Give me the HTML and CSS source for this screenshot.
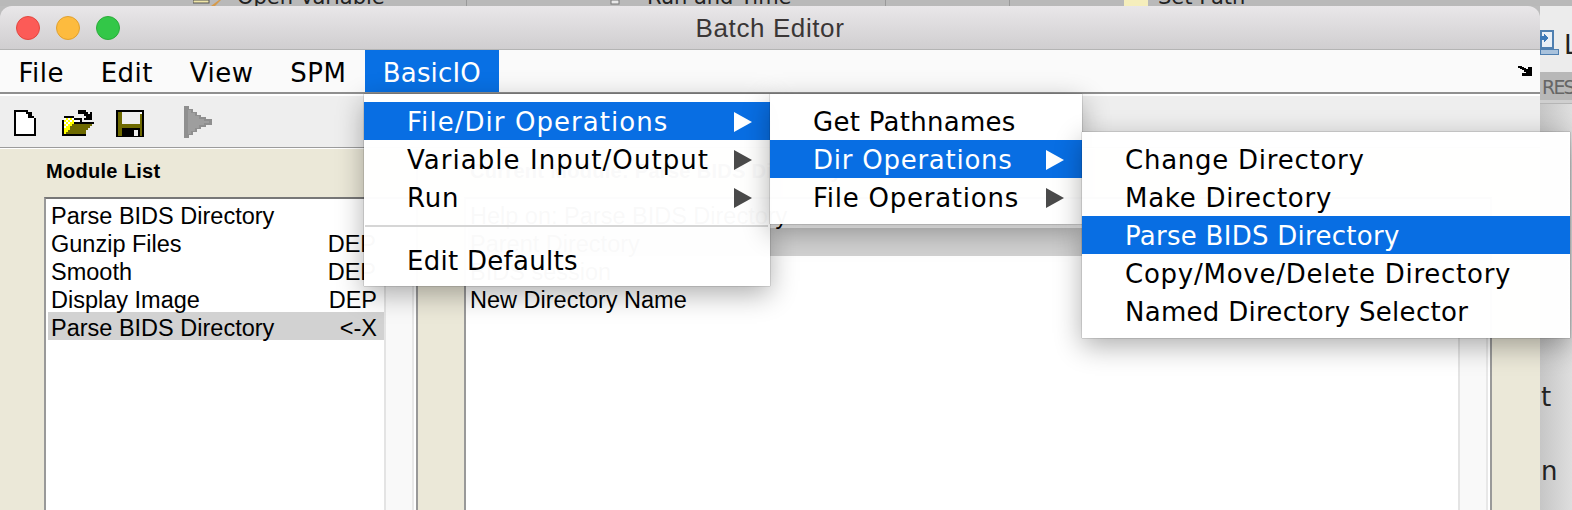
FILE: index.html
```html
<!DOCTYPE html>
<html lang="en">
<head>
    <meta charset="UTF-8">
    <title>Batch Editor</title>
    <link rel="stylesheet" href="styles.css">
</head>
<body>
    <div class="strip">
        <svg class="strip-icon" width="28" height="6" viewBox="0 0 28 6"><rect x="0" y="0" width="16" height="3" fill="#efe6a8" stroke="#555" stroke-width="1"/><path d="M18 6 L26 0 L28 0 L22 6 Z" fill="#d69a4a"/></svg>
        <span class="strip-text strip-open">Open Variable</span>
        <i class="strip-sep"></i>
        <svg class="strip-icon strip-icon-run" width="18" height="6" viewBox="0 0 18 6"><rect x="4" y="0" width="8" height="4" fill="#e8e8e8" stroke="#777"/></svg>
        <span class="strip-text strip-run">Run and Time</span>
        <i class="strip-sep"></i>
        <i class="strip-sep sep-far"></i>
        <i class="strip-file"></i>
        <span class="strip-text strip-path">Set Path</span>
    </div>

    <div class="desk">
        <div class="window">
            <div class="titlebar">
                <span class="light red"></span>
                <span class="light amber"></span>
                <span class="light green"></span>
                <span class="title">Batch Editor</span>
            </div>

            <div class="menubar">
                <span class="menubar-item">File</span>
                <span class="menubar-item">Edit</span>
                <span class="menubar-item">View</span>
                <span class="menubar-item">SPM</span>
                <span class="menubar-item active">BasicIO</span>
                <svg class="dock-icon" width="14" height="10" viewBox="0 0 14 10" shape-rendering="crispEdges">
                    <path d="M0 0H4V1H6V2H8V3H10V1H14V10H4V7H8V6H6V4H4V3H2V2H0Z" fill="#000"/>
                </svg>
            </div>

            <div class="toolbar">
                <svg class="tool-new" width="22" height="32" viewBox="0 0 22 32" shape-rendering="crispEdges">
                    <path d="M0 4H14V6H16V8H18V10H20V12H22V30H0Z" fill="#000"/>
                    <path d="M2 6H12V8H14V12H20V28H2Z" fill="#fff"/>
                    <rect x="16" y="6" width="2" height="2" fill="#000"/>
                </svg>
                <svg class="tool-open" width="32" height="32" viewBox="0 0 32 32" shape-rendering="crispEdges">
                    <path d="M14 6H16V4H24V6H26V8H28V6H30V14H22V12H24V10H22V8H16V6Z" fill="#000"/>
                    <path d="M0 14H2V10H12V12H20V16H32V18H30V20H28V22H26V24H24V30H0Z" fill="#000"/>
                    <rect x="2" y="12" width="10" height="16" fill="#ffff00"/>
                    <path d="M2 12h2v2h-2zM6 12h2v2h-2zM10 12h2v2h-2zM4 14h2v2h-2zM8 14h2v2h-2zM12 14h6v2h-6zM2 16h2v2h-2zM6 16h2v2h-2zM4 18h2v2h-2zM2 20h2v2h-2z" fill="#fff"/>
                    <path d="M10 18H30V20H28V22H26V24H24V28H4V26H6V24H8V20H10Z" fill="#6e6a00"/>
                </svg>
                <svg class="tool-save" width="28" height="32" viewBox="0 0 28 32" shape-rendering="crispEdges">
                    <rect x="0" y="4" width="28" height="27" fill="#000"/>
                    <rect x="2" y="6" width="24" height="24" fill="#6e6a00"/>
                    <rect x="6" y="6" width="18" height="12" fill="#eeeeee"/>
                    <rect x="6" y="20" width="18" height="2" fill="#6e6a00"/>
                    <rect x="6" y="22" width="18" height="9" fill="#000"/>
                    <rect x="18" y="24" width="4" height="6" fill="#eeeeee"/>
                    <rect x="24" y="6" width="2" height="2" fill="#fff"/>
                </svg>
                <svg class="tool-run" width="28" height="32" viewBox="0 0 28 32" shape-rendering="crispEdges">
                    <path d="M0 0H5V3H9V6H13V9H17V11H22V13H28V19H22V21H17V23H13V26H9V29H5V32H0Z" fill="#8f8f8f"/>
                    <path d="M4 4H7V7H11V10H15V13H20V15H25V17H20V19H15V22H11V25H7V28H4Z" fill="#9e9e9e"/>
                </svg>
            </div>

            <div class="panes">
                <div class="pane pane-left">
                    <div class="pane-label">Module List</div>
                    <div class="listbox">
                        <div class="list-rows">
                            <div class="row">Parse BIDS Directory</div>
                            <div class="row">Gunzip Files<span class="tag tag-dep">DEP</span></div>
                            <div class="row">Smooth<span class="tag tag-dep">DEP</span></div>
                            <div class="row">Display Image<span class="tag">DEP</span></div>
                            <div class="row selected">Parse BIDS Directory<span class="tag">&lt;-X</span></div>
                        </div>
                        <div class="scroll"></div>
                    </div>
                </div>
                <div class="pane pane-right">
                    <div class="pane-label">Current Module: Parse BIDS Directory</div>
                    <div class="listbox">
                        <div class="list-rows">
                            <div class="row">Help on: Parse BIDS Directory</div>
                            <div class="row selected">Parent Directory<span class="tag tag-wide">&lt;-X</span></div>
                            <div class="row">BIDS session</div>
                            <div class="row">New Directory Name</div>
                        </div>
                        <div class="scroll"></div>
                    </div>
                </div>
            </div>
        </div>

        <div class="side">
            <div class="side-top">
                <svg class="side-icon" width="20" height="26" viewBox="0 0 20 26" shape-rendering="crispEdges">
                    <rect x="1" y="1" width="12" height="17" fill="#e9eff6" stroke="#4f7fb0" stroke-width="2"/>
                    <path d="M0 6H4V4L8 8L4 12V10H0Z" fill="#3b78b8"/>
                    <rect x="0" y="19" width="18" height="5" fill="#a9c2dc" stroke="#4f7fb0"/>
                </svg>
                <span class="side-letter">L</span>
            </div>
            <div class="side-band">RES</div>
            <div class="side-body">
                <span class="side-t">t</span>
                <span class="side-n">n</span>
            </div>
        </div>
    </div>

    <div class="menu menu-first">
        <div class="menu-item hot wide">File/Dir Operations<span class="arrow"></span></div>
        <div class="menu-item wide">Variable Input/Output<span class="arrow"></span></div>
        <div class="menu-item">Run<span class="arrow"></span></div>
        <div class="menu-sep"></div>
        <div class="menu-item tight">Edit Defaults</div>
    </div>
    <div class="menu menu-second">
        <div class="menu-item tight">Get Pathnames</div>
        <div class="menu-item hot">Dir Operations<span class="arrow"></span></div>
        <div class="menu-item">File Operations<span class="arrow"></span></div>
    </div>
    <div class="menu menu-third">
        <div class="menu-item">Change Directory</div>
        <div class="menu-item">Make Directory</div>
        <div class="menu-item hot tight">Parse BIDS Directory</div>
        <div class="menu-item">Copy/Move/Delete Directory</div>
        <div class="menu-item tight">Named Directory Selector</div>
    </div>
</body>
</html>
```

FILE: styles.css
```css
html, body { margin: 0; height: 510px; overflow: hidden; }
body { background-color: #bcbcbc; font-family: "Liberation Sans", Arial, sans-serif; color: #000; position: relative; }

/* the window behind, only its bottom edge shows */
.strip { display: flex; align-items: flex-end; height: 6px; overflow: hidden; padding-left: 193px; background-color: #b9b9b9; }
.strip > * { flex: none; }
.strip-text { font: 21px/18px "DejaVu Sans", sans-serif; color: #222; white-space: nowrap; }
.strip-open { margin-left: 16px; width: 229px; }
.strip-sep { display: block; width: 1px; height: 6px; background-color: #999; }
.strip-icon-run { margin-left: 140px; }
.strip-run { margin-left: 22px; width: 238px; }
.sep-far { margin-left: 123px; }
.strip-file { display: block; width: 24px; height: 6px; margin-left: 114px; background-color: #f5eebc; }
.strip-path { margin-left: 10px; }

.desk { display: flex; height: 504px; }
.window { width: 1540px; flex: none; display: flex; flex-direction: column; border-radius: 12px 12px 0 0; overflow: hidden; }

.titlebar { position: relative; display: flex; align-items: center; flex: none; height: 43px; padding-left: 16px; gap: 16px; background: linear-gradient(#e9e7e9, #d0ced0); border-bottom: 1px solid #b4b4b4; }
.light { width: 22px; height: 22px; border-radius: 50%; border: 1px solid; }
.red { background-color: #fc5b57; border-color: #e2473f; }
.amber { background-color: #fdbb3e; border-color: #e0a02f; }
.green { background-color: #33c748; border-color: #2bac3a; }
.title { position: absolute; left: 0; right: 0; top: 7px; text-align: center; font-size: 26px; letter-spacing: .6px; color: #3a3636; }

.menubar { display: flex; flex: none; height: 42px; background-color: #fafafa; font: 26px/46px "DejaVu Sans", sans-serif; letter-spacing: .5px; }
.menubar-item { padding: 0 18.4px; }
.menubar-item.active { padding: 0 18px; background-color: #0870e4; color: #fff; letter-spacing: .15px; }
.dock-icon { margin: 16px 8px 0 auto; }

.toolbar { display: flex; flex: none; box-sizing: border-box; height: 56px; padding: 14px 0 0 14px; background: linear-gradient(#8f8f8f 0, #8f8f8f 1.5px, #fff 1.5px, #fff 4px, #eeeeee 4px); border-bottom: 1px solid #9c9c9c; }
.tool-open { margin-left: 26px; }
.tool-save { margin-left: 22px; }
.tool-run { margin-left: 40px; }

.panes { display: flex; flex: 1; min-height: 0; background-color: #ebe8d8; border-top: 1px solid #fff; }
.pane { display: flex; flex-direction: column; flex: none; box-sizing: border-box; }
.pane-left { width: 416px; padding-left: 44px; }
.pane-right { width: 1076px; padding-left: 46px; border-left: 2px solid #999; }
.pane-label { height: 48px; line-height: 44px; padding-left: 2px; font-size: 20px; font-weight: bold; letter-spacing: .3px; white-space: nowrap; }
.pane-right .pane-label { padding-left: 6px; }

.listbox { flex: 1; display: flex; background-color: #fff; border-top: 2px solid #777; border-left: 2px solid #999; }
.pane-right .listbox { border-right: 2px solid #999; border-top-color: #888; }
.list-rows { flex: 1; padding: 1px 0 0 2px; }
.row { display: flex; justify-content: space-between; height: 28px; line-height: 32px; padding: 0 7px 0 3px; font-size: 23.5px; white-space: nowrap; }
.pane-right .row { padding-left: 2px; }
.row.selected { background-color: #d2d2d2; }
.tag-dep { margin-right: 1px; }
.tag-wide { margin-right: 10px; }
.scroll { box-sizing: border-box; width: 30px; margin-right: 2px; flex: none; background-color: #f9f9f9; border-left: 2px solid #e4e4e4; border-right: 2px solid #e8e8e8; }

.side { flex: 1; display: flex; flex-direction: column; min-width: 0; overflow: hidden; background-color: #dcdcdc; }
.side-top { display: flex; height: 66px; padding-top: 24px; box-sizing: border-box; background-color: #ececec; }
.side-icon { flex: none; }
.side-letter { margin-left: 4px; font: 26px/30px "DejaVu Sans", sans-serif; color: #222; }
.side-band { height: 28px; padding-left: 2px; background-color: #b8b8b8; color: #666; font: 19px/30px "DejaVu Sans", sans-serif; letter-spacing: -1.8px; white-space: nowrap; border-bottom: 3px solid #cfcfcf; overflow: hidden; }
.side-body { flex: 1; display: flex; flex-direction: column; padding-left: 1px; border-top: 1px solid #b5b5b5; background: linear-gradient(90deg, #c6c6c6, #dedede); }
.side-t, .side-n { font: 26px/30px "DejaVu Sans", sans-serif; color: #222; }
.side-t { margin-top: 278px; }
.side-n { margin-top: 44px; }

/* popup menus, slightly see-through like the real ones */
.menu { position: absolute; box-sizing: border-box; padding: 8px 0; background-color: rgba(255, 255, 255, .975); box-shadow: 0 0 1px rgba(0, 0, 0, .6), 0 8px 26px rgba(0, 0, 0, .32); font: 26px/38px "DejaVu Sans", sans-serif; letter-spacing: .75px; white-space: nowrap; }
.menu-first { left: 364px; top: 94px; width: 406px; height: 192px; }
.menu-second { left: 770px; top: 94px; width: 312px; height: 130px; }
.menu-third { left: 1082px; top: 132px; width: 488px; height: 206px; }
.menu-item { display: flex; align-items: center; justify-content: space-between; box-sizing: border-box; height: 38px; padding: 2px 18px 0 43px; }
.menu-item.wide { letter-spacing: 1.05px; }
.menu-item.tight { letter-spacing: .28px; }
.menu-item.hot { background-color: rgba(0, 105, 226, .97); color: #fff; }
.menu-sep { height: 2px; margin: 9px 2px 14px 1px; background-color: #d6d6d6; }
.arrow { width: 0; height: 0; border-left: 18px solid #4a4a4a; border-top: 10px solid transparent; border-bottom: 10px solid transparent; }
.hot .arrow { border-left-color: #fff; }
```
